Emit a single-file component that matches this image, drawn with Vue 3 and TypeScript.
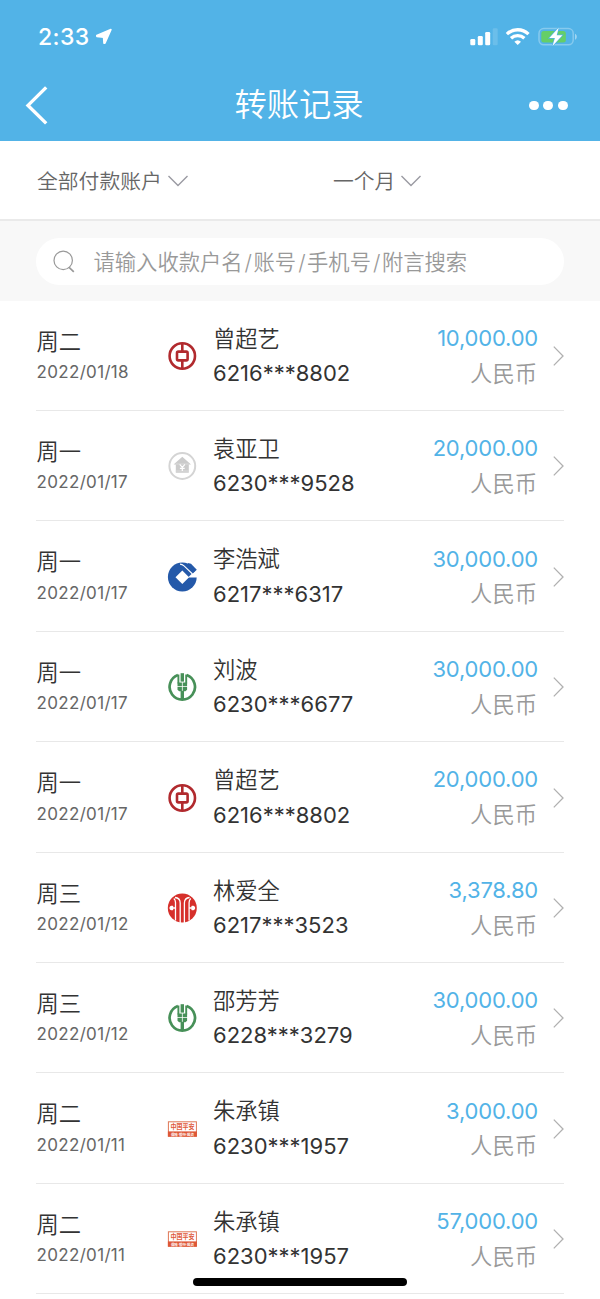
<script setup lang="ts">
type Bank = 'boc' | 'rural' | 'ccb' | 'abc' | 'citic' | 'pingan'

interface Transfer {
  day: string
  date: string
  bank: Bank
  name: string
  account: string
  amount: string
}

const searchTerms: string[] = ['请输入收款户名', '账号', '手机号', '附言搜索']

const transfers: Transfer[] = [
  { day: '周二', date: '2022/01/18', bank: 'boc', name: '曾超艺', account: '6216***8802', amount: '10,000.00' },
  { day: '周一', date: '2022/01/17', bank: 'rural', name: '袁亚卫', account: '6230***9528', amount: '20,000.00' },
  { day: '周一', date: '2022/01/17', bank: 'ccb', name: '李浩斌', account: '6217***6317', amount: '30,000.00' },
  { day: '周一', date: '2022/01/17', bank: 'abc', name: '刘波', account: '6230***6677', amount: '30,000.00' },
  { day: '周一', date: '2022/01/17', bank: 'boc', name: '曾超艺', account: '6216***8802', amount: '20,000.00' },
  { day: '周三', date: '2022/01/12', bank: 'citic', name: '林爱全', account: '6217***3523', amount: '3,378.80' },
  { day: '周三', date: '2022/01/12', bank: 'abc', name: '邵芳芳', account: '6228***3279', amount: '30,000.00' },
  { day: '周二', date: '2022/01/11', bank: 'pingan', name: '朱承镇', account: '6230***1957', amount: '3,000.00' },
  { day: '周二', date: '2022/01/11', bank: 'pingan', name: '朱承镇', account: '6230***1957', amount: '57,000.00' },
]
</script>

<template>
  <div class="screen">
    <header class="header">
      <div class="status">
        <div class="clock">
          <span class="time">2:33</span>
          <svg class="location" width="18" height="18" viewBox="0 0 18 18"><path d="M15.9 1.6 9.9 15.2 9 15.1 8.6 9.2 1.9 8.5 1.8 7.4Z" fill="#fff" stroke="#fff" stroke-width="1.6" stroke-linejoin="round" /></svg>
        </div>
        <svg class="indicators" width="108" height="20" viewBox="0 0 108 20">
          <g fill="#fff">
            <rect x="0.3" y="12" width="5" height="6.2" rx="1.3" />
            <rect x="7.8" y="9" width="5" height="9.2" rx="1.3" />
            <rect x="15.2" y="5" width="5" height="13.2" rx="1.3" />
            <rect x="22.7" y="1.3" width="5" height="16.9" rx="1.3" opacity=".15" />
          </g>
          <g fill="none" stroke="#fff" stroke-width="3.3">
            <path d="M36.9 7.1a15.6 15.6 0 0 1 21.6 0" />
            <path d="M41 11.3a9.8 9.8 0 0 1 13.4 0" />
          </g>
          <path d="M44.4 14.7a4.9 4.9 0 0 1 6.6 0L47.7 18Z" fill="#fff" />
          <rect x="69" y="1.6" width="34.2" height="16.2" rx="4.8" fill="none" stroke="#fff" stroke-opacity=".3" stroke-width="1.5" />
          <path d="M105 6.8c2.4 1 2.4 5 0 6Z" fill="#fff" opacity=".45" />
          <rect x="71.3" y="4" width="24.5" height="11.5" rx="2.5" fill="#65ce68" />
          <path d="M88.8.4 79.3 11h5.6l-2.4 7.9L92.4 8.2h-5.7Z" fill="#fff" stroke="#52b3e7" stroke-width="1.3" paint-order="stroke" />
        </svg>
      </div>
      <div class="nav">
        <svg class="back" width="24" height="40" viewBox="0 0 24 40"><path d="M21.2 2.4 3 20.4l18.2 18" fill="none" stroke="#fff" stroke-width="3.4" /></svg>
        <h1 class="title">转账记录</h1>
        <div class="more"><i></i><i></i><i></i></div>
      </div>
    </header>

    <div class="filters">
      <div class="filter account-filter">
        <span>全部付款账户</span>
        <svg width="20" height="12" viewBox="0 0 20 12"><path d="m.5 1 9.5 9.4L19.5 1" fill="none" stroke="#9a9aa2" stroke-width="1.4" /></svg>
      </div>
      <div class="filter">
        <span>一个月</span>
        <svg width="20" height="12" viewBox="0 0 20 12"><path d="m.5 1 9.5 9.4L19.5 1" fill="none" stroke="#9a9aa2" stroke-width="1.4" /></svg>
      </div>
    </div>

    <div class="search-area">
      <div class="search">
        <svg width="22" height="23" viewBox="0 0 22 23"><g fill="none" stroke="#999" stroke-width="1.2"><circle cx="10.2" cy="10.4" r="9.2" /><path d="m15.8 17.1 5 4.8" stroke-width="1.6" /></g></svg>
        <div class="placeholder">
          <template v-for="(term, index) in searchTerms" :key="term"><span v-if="index" class="slash">/</span><span>{{ term }}</span></template>
        </div>
      </div>
    </div>

    <main class="list">
      <article v-for="(item, index) in transfers" :key="index" class="row">
        <div class="when">
          <div class="day">{{ item.day }}</div>
          <div class="date">{{ item.date }}</div>
        </div>
        <svg class="bank" width="30" height="30" viewBox="0 0 30 30">
          <g v-if="item.bank === 'boc'" fill="none" stroke="#b12a2e">
            <circle cx="15.3" cy="15" r="12.7" stroke-width="2.6" />
            <rect x="10" y="10.6" width="10.6" height="8.8" rx="1.3" stroke-width="2.6" />
            <path d="M15.3 2v8.5M15.3 19.5V28" stroke-width="2.6" />
          </g>
          <g v-else-if="item.bank === 'rural'">
            <circle cx="15.3" cy="15" r="12.9" fill="none" stroke="#d4d4d4" stroke-width="2" />
            <path d="M15.3 5.8 24 13.4h-2.2v8.4H8.8v-8.4H6.6Z" fill="#cbcbcb" />
            <path d="M8.8 13h13M8.8 20h13" stroke="#e0e0e0" stroke-width=".8" />
            <path d="m12.7 13.3 2.6 3 2.6-3M15.3 16V20M12.9 17.3h4.8" fill="none" stroke="#fff" stroke-width="1.2" />
          </g>
          <g v-else-if="item.bank === 'ccb'">
            <circle cx="15.3" cy="15" r="14.4" fill="#2459a9" />
            <path d="m15.3 8.4 6.8 6.9-6.8 6.7-6.8-6.7Z" fill="#fff" />
            <path d="M21 15.4 25.3 11.3 29.7 7.7H30.5V15.4Z" fill="#fff" />
            <path d="m21 .9 3 .8 5.8 6.1-4.3 4-4-3.4Z" fill="#2459a9" />
            <path d="M13 2.1c2.3 0 3 .8 4.3 2l8.2 7.9" fill="none" stroke="#fff" stroke-width="1.1" />
          </g>
          <g v-else-if="item.bank === 'abc'">
            <path d="M10.9 3A12.7 12.7 0 1 0 19.7 3" fill="none" stroke="#479058" stroke-width="2.7" />
            <path d="M13.6 1.2h3.4v8.4h-3.4Z" fill="#479058" />
            <path d="M11.4 2.6v8.9M19.2 2.6v8.9" stroke="#479058" stroke-width="1.9" />
            <path d="M10.5 10.4h4.4v3.9h-4.4ZM15.7 10.4h4.4v3.9h-4.4ZM10.5 15h4.4v4.3h-2.7l-1.7-1.5ZM15.7 15h4.4v2.8l-1.7 1.5h-2.7Z" fill="#479058" />
            <path d="M15.3 18.8V28" stroke="#479058" stroke-width="3.4" />
          </g>
          <g v-else-if="item.bank === 'citic'">
            <circle cx="15.3" cy="15" r="14.5" fill="#d6302b" />
            <g fill="none" stroke="#fff" stroke-width="1.3">
              <path d="M8 4.5c3.6.4 5.2 2.2 5.2 5.4v20M22.6 4.5c-3.6.4-5.2 2.2-5.2 5.4v20" />
              <path d="M6.8 5.4c1.3 1 1.7 2.1 1.7 4.2v18M23.8 5.4c-1.3 1-1.7 2.1-1.7 4.2v18" />
            </g>
            <path d="M2.5 14.3c.9-1.5 2.2-1.8 3.7-1.3v1.3H8.5v1.4H6.2v1.3c-1.5.5-2.8.2-3.7-1.3ZM28.1 14.3c-.9-1.5-2.2-1.8-3.7-1.3v1.3H22.1v1.4h2.3v1.3c1.5.5 2.8.2 3.7-1.3Z" fill="#fff" />
          </g>
          <g v-else>
            <rect x="1.4" y="7.8" width="28" height="14.4" fill="#fff" stroke="#df7756" stroke-width="1" />
            <rect x=".9" y="17.4" width="29" height="5.3" fill="#de5737" />
            <text x="15.4" y="15.2" text-anchor="middle" textLength="24" lengthAdjust="spacingAndGlyphs" class="pingan-name">中国平安</text>
            <text x="15.4" y="21.6" text-anchor="middle" textLength="23" lengthAdjust="spacingAndGlyphs" class="pingan-sub">保险·银行·投资</text>
          </g>
        </svg>
        <div class="payee">
          <div class="name">{{ item.name }}</div>
          <div class="account">{{ item.account }}</div>
        </div>
        <div class="money">
          <div class="amount">{{ item.amount }}</div>
          <div class="currency">人民币</div>
        </div>
        <svg class="chevron" width="11" height="20" viewBox="0 0 11 20"><path d="m.8.6 9.2 9.4L.8 19.4" fill="none" stroke="#b0b0b0" stroke-width="1.3" /></svg>
      </article>
    </main>
    <div class="home-indicator"></div>
  </div>
</template>

<style>
body {
  margin: 0;
  background: #fff;
}
</style>

<style scoped>
.screen {
  position: relative;
  width: 600px;
  height: 1299px;
  overflow: hidden;
  background: #fff;
  color: #333;
  font-family: Inter, "Noto Sans CJK SC", sans-serif;
}
.header {
  height: 140.6px;
  background: #52b3e7;
  color: #fff;
}
.status {
  display: flex;
  justify-content: space-between;
  height: 70px;
  padding: 0 22px 0 38px;
  box-sizing: border-box;
}
.clock {
  display: flex;
  gap: 5px;
}
.time {
  margin-top: 22px;
  font-size: 23px;
  font-weight: 550;
  line-height: 30px;
  letter-spacing: 0.4px;
}
.location {
  margin-top: 28px;
}
.indicators {
  margin-top: 27px;
}
.nav {
  display: grid;
  grid-template-columns: 100px 1fr 100px;
  align-items: center;
  height: 70px;
}
.back {
  margin-left: 25px;
}
.title {
  margin: 0 2px 0 0;
  text-align: center;
  font-size: 32.3px;
  font-weight: 350;
  line-height: 48px;
}
.more {
  display: flex;
  gap: 4.6px;
  margin: 1px 0 0 29px;
}
.more i {
  width: 9.8px;
  height: 9.8px;
  border-radius: 50%;
  background: #fff;
}
.filters {
  display: flex;
  height: 80px;
  padding-left: 37px;
  box-sizing: border-box;
  border-bottom: 2px solid #eaeaea;
  color: #666;
  font-size: 20.8px;
  font-weight: 350;
}
.filter {
  display: flex;
  align-items: center;
  gap: 6px;
  height: 81px;
}
.filter span {
  margin-top: -2px;
}
.account-filter {
  width: 296px;
}
.search-area {
  height: 80px;
  padding: 17px 36px 0;
  box-sizing: border-box;
  background: #f8f8f8;
}
.search {
  display: flex;
  align-items: center;
  gap: 18.5px;
  height: 47.5px;
  padding-left: 17px;
  border-radius: 24px;
  background: #fff;
  color: #999;
  font-size: 21.3px;
  font-weight: 350;
}
.placeholder {
  margin-top: -2px;
  white-space: nowrap;
}
.slash {
  padding: 0 1.5px 0 2px;
}
.list {
  padding: 0 36px;
}
.row {
  display: flex;
  height: 110.4px;
  box-sizing: border-box;
  border-bottom: 1.5px solid #e8e8e8;
}
.when {
  width: 130.5px;
  padding-left: 0.5px;
}
.day {
  margin-top: 25px;
  font-size: 22.3px;
  line-height: 32px;
}
.date {
  margin-top: 1.5px;
  color: #666;
  font-size: 17px;
  font-weight: 400;
  line-height: 26px;
  letter-spacing: 0.33px;
}
.bank {
  flex: none;
  margin-top: 40.5px;
}
.payee {
  width: 190px;
  margin-left: 16px;
}
.name {
  margin-top: 22px;
  font-size: 22.3px;
  line-height: 32px;
}
.account {
  margin-top: 2.5px;
  font-size: 22px;
  font-weight: 400;
  line-height: 32px;
}
.day,
.name,
.currency {
  font-weight: 350;
}
.money {
  flex: 1;
  text-align: right;
}
.amount {
  margin: 21.3px -1px 0 0;
  color: #52b3e7;
  font-size: 22px;
  font-weight: 400;
  line-height: 32px;
  letter-spacing: -0.2px;
}
.currency {
  margin-top: 3.7px;
  color: #999;
  font-size: 22.3px;
  line-height: 32px;
}
.chevron {
  flex: none;
  margin: 45.5px 0 0 16px;
}
.pingan-name {
  fill: #de5737;
  font-size: 6.3px;
  font-weight: 700;
}
.pingan-sub {
  fill: #fff;
  font-size: 3.6px;
  font-weight: 700;
}
.home-indicator {
  position: absolute;
  bottom: 13px;
  left: 193px;
  width: 214px;
  height: 8px;
  border-radius: 4px;
  background: #000;
}
</style>
